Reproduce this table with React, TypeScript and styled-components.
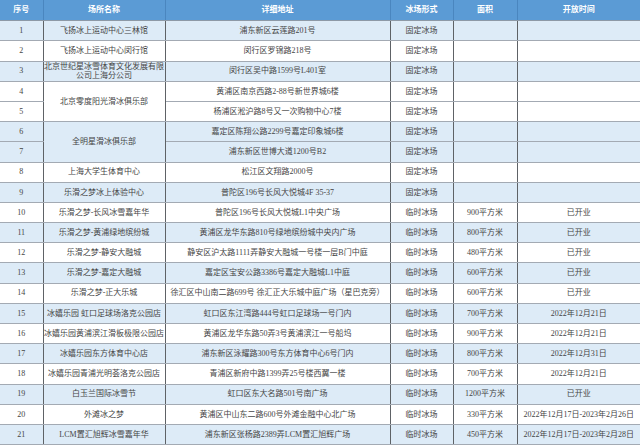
import React from "react";
import styled, { createGlobalStyle } from "styled-components";

const GlobalStyle = createGlobalStyle`
  html, body { margin: 0; padding: 0; background: #ffffff; }
  body { font-family: "Liberation Serif", "Noto Sans CJK SC", serif; }
`;

const Table = styled.table`
  width: 640px;
  border-collapse: collapse;
  table-layout: fixed;
  font-family: "Liberation Serif", "Noto Sans CJK SC", serif;
  font-size: 8px;
  line-height: 9.5px;
  color: #454545;
`;

const HeadRow = styled.tr`
  height: 20.7px;
  background: #5b9bd5;
`;

const HeadCell = styled.th`
  padding: 0;
  color: #ffffff;
  font-weight: 700;
  text-align: center;
  vertical-align: middle;
  border-left: 1px solid #4a86bf;
  border-right: 1px solid #4a86bf;
  border-bottom: 1px solid #8d99a6;
  &:first-child { border-left: none; }
  &:last-child { border-right: none; }
`;

const Row = styled.tr<{ $shade: boolean }>`
  height: 20.2px;
  background: ${(p) => (p.$shade ? "#ddebf7" : "#ffffff")};
`;

const Cell = styled.td<{ $wrap?: boolean }>`
  padding: 0;
  text-align: center;
  vertical-align: middle;
  white-space: ${(p) => (p.$wrap ? "normal" : "nowrap")};
  overflow: visible;
  border-top: 1px solid #a3aab3;
  border-bottom: 1px solid #a3aab3;
  border-left: 1px solid #5e6266;
  border-right: 1px solid #5e6266;
  &:first-child { border-left: none; }
  &:last-child { border-right: none; }
`;

type Item = {
  no: number;
  name?: string;
  span?: number;
  wrap?: boolean;
  addr: string;
  kind: string;
  area: string;
  open: string;
  shade: boolean;
};

const items: Item[] = [
  { no: 1, name: "飞扬冰上运动中心三林馆", addr: "浦东新区云莲路201号", kind: "固定冰场", area: "", open: "", shade: true },
  { no: 2, name: "飞扬冰上运动中心闵行馆", addr: "闵行区罗锦路218号", kind: "固定冰场", area: "", open: "", shade: false },
  { no: 3, name: "北京世纪星冰雪体育文化发展有限公司上海分公司", wrap: true, addr: "闵行区吴中路1599号L401室", kind: "固定冰场", area: "", open: "", shade: true },
  { no: 4, name: "北京零度阳光滑冰俱乐部", span: 2, addr: "黄浦区南京西路2-88号新世界城6楼", kind: "固定冰场", area: "", open: "", shade: false },
  { no: 5, addr: "杨浦区淞沪路8号又一次购物中心7楼", kind: "固定冰场", area: "", open: "", shade: false },
  { no: 6, name: "全明星滑冰俱乐部", span: 2, addr: "嘉定区陈翔公路2299号嘉定印象城6楼", kind: "固定冰场", area: "", open: "", shade: true },
  { no: 7, addr: "浦东新区世博大道1200号B2", kind: "固定冰场", area: "", open: "", shade: true },
  { no: 8, name: "上海大学生体育中心", addr: "松江区文翔路2000号", kind: "固定冰场", area: "", open: "", shade: false },
  { no: 9, name: "乐滑之梦冰上体验中心", addr: "普陀区196号长风大悦城4F 35-37", kind: "固定冰场", area: "", open: "", shade: true },
  { no: 10, name: "乐滑之梦-长风冰雪嘉年华", addr: "普陀区196号长风大悦城L1中央广场", kind: "临时冰场", area: "900平方米", open: "已开业", shade: false },
  { no: 11, name: "乐滑之梦-黄浦绿地缤纷城", addr: "黄浦区龙华东路810号绿地缤纷城中央内广场", kind: "临时冰场", area: "800平方米", open: "已开业", shade: true },
  { no: 12, name: "乐滑之梦-静安大融城", addr: "静安区沪太路1111弄静安大融城一号楼一层B门中庭", kind: "临时冰场", area: "480平方米", open: "已开业", shade: false },
  { no: 13, name: "乐滑之梦-嘉定大融城", addr: "嘉定区宝安公路3386号嘉定大融城L1中庭", kind: "临时冰场", area: "600平方米", open: "已开业", shade: true },
  { no: 14, name: "乐滑之梦-正大乐城", addr: "徐汇区中山南二路699号 徐汇正大乐城中庭广场（星巴克旁）", kind: "临时冰场", area: "600平方米", open: "已开业", shade: false },
  { no: 15, name: "冰嬉乐园 虹口足球场洛克公园店", addr: "虹口区东江湾路444号虹口足球场一号门内", kind: "临时冰场", area: "700平方米", open: "2022年12月21日", shade: true },
  { no: 16, name: "冰嬉乐园黄浦滨江滑板极限公园店", addr: "黄浦区龙华东路50弄3号黄浦滨江一号船坞", kind: "临时冰场", area: "900平方米", open: "2022年12月21日", shade: false },
  { no: 17, name: "冰嬉乐园东方体育中心店", addr: "浦东新区泳耀路300号东方体育中心6号门内", kind: "临时冰场", area: "800平方米", open: "2022年12月31日", shade: true },
  { no: 18, name: "冰嬉乐园青浦光明荟洛克公园店", addr: "青浦区新府中路1399弄25号楼西翼一楼", kind: "临时冰场", area: "700平方米", open: "2022年12月21日", shade: false },
  { no: 19, name: "白玉兰国际冰雪节", addr: "虹口区东大名路501号南广场", kind: "临时冰场", area: "1200平方米", open: "已开业", shade: true },
  { no: 20, name: "外滩冰之梦", addr: "黄浦区中山东二路600号外滩金融中心北广场", kind: "临时冰场", area: "330平方米", open: "2022年12月17日-2023年2月26日", shade: false },
  { no: 21, name: "LCM置汇旭辉冰雪嘉年华", addr: "浦东新区张杨路2389弄LCM置汇旭辉广场", kind: "临时冰场", area: "450平方米", open: "2022年12月17日-2023年2月28日", shade: true },
];

const headers = ["序号", "场所名称", "详细地址", "冰场形式", "面积", "开放时间"];
const widths = [43, 122, 225, 63, 64, 123];

export default function App() {
  return (
    <>
      <GlobalStyle />
      <Table>
        <colgroup>
          {widths.map((w, i) => (
            <col key={i} style={{ width: w }} />
          ))}
        </colgroup>
        <thead>
          <HeadRow>
            {headers.map((h) => (
              <HeadCell key={h}>{h}</HeadCell>
            ))}
          </HeadRow>
        </thead>
        <tbody>
          {items.map((it) => (
            <Row key={it.no} $shade={it.shade}>
              <Cell>{it.no}</Cell>
              {it.name !== undefined && (
                <Cell rowSpan={it.span ?? 1} $wrap={it.wrap}>
                  {it.name}
                </Cell>
              )}
              <Cell>{it.addr}</Cell>
              <Cell>{it.kind}</Cell>
              <Cell>{it.area}</Cell>
              <Cell>{it.open}</Cell>
            </Row>
          ))}
        </tbody>
      </Table>
    </>
  );
}
